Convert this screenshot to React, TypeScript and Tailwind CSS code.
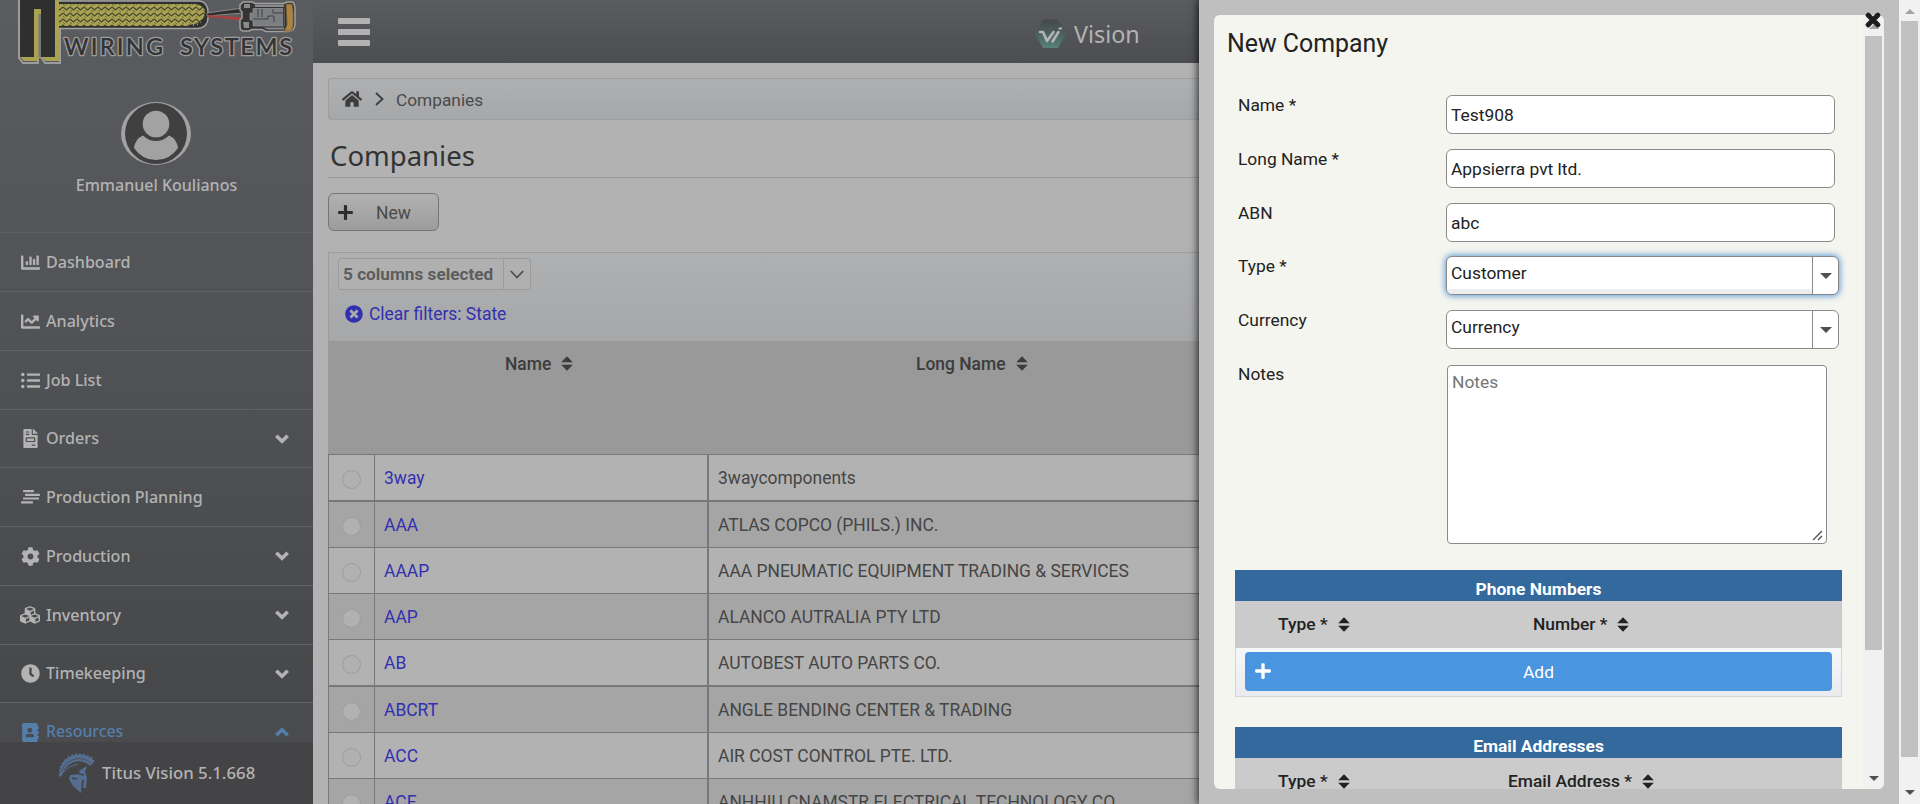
import type { ReactNode } from 'react';
import {
  FaAddressBook,
  FaChartBar,
  FaChartLine,
  FaClock,
  FaCog,
  FaCubes,
  FaFileInvoice,
  FaHome,
  FaListUl,
  FaPlus,
  FaTimes,
  FaTimesCircle,
} from 'react-icons/fa';

function PlanningIcon() {
  return (
    <svg width="19" height="14" viewBox="0 0 19 14" fill="currentColor">
      <rect x="2" y="0" width="11" height="2.2" rx="0.6" />
      <rect x="4" y="3.7" width="15" height="2.2" rx="0.6" />
      <rect x="2" y="7.4" width="16" height="2.2" rx="0.6" />
      <rect x="0" y="11.2" width="12" height="2.2" rx="0.6" />
    </svg>
  );
}

function NavChevron({ up }: { up?: boolean }) {
  return (
    <svg width="14" height="10" viewBox="0 0 14 10" fill="none" stroke="currentColor" strokeWidth="3.600">
      <path d={up ? 'M1.300 8.200 L7 2.800 L12.700 8.200' : 'M1.300 1.800 L7 7.200 L12.700 1.800'} />
    </svg>
  );
}

const logoText = "font-['Lato',sans-serif] text-[23.5px] font-semibold";

function Logo() {
  return (
    <svg className="block" width="313" height="70" viewBox="0 0 313 70">
      <defs>
        <pattern id="braid" width="7" height="6" patternUnits="userSpaceOnUse">
          <rect width="7" height="6" fill="#a8a251" />
          <path d="M0 1 L3.5 4 L7 1" fill="none" stroke="#45452f" strokeWidth="1.1" />
          <path d="M0 4.2 L2 6" stroke="#5f5d38" strokeWidth="0.8" />
        </pattern>
      </defs>
      <path d="M19 -3 V58 L23 63 H38 V57 H41 L45 63 H60 V-3 Z" fill="none" stroke="#9c9c9c" strokeWidth="2" />
      <path d="M58 1 H200 Q208 3 208 12 V18 Q208 27 198 28.500 H58 Z" fill="#303030" stroke="#a2a2a2" strokeWidth="1.5" />
      <path d="M58 4 H196 Q206 6 205 14 Q204 23 196 26 H58 Z" fill="url(#braid)" />
      <path d="M190 26 Q204 25 206 15" fill="none" stroke="#303030" strokeWidth="3" strokeDasharray="3 1" />
      <path d="M207 13 L243 8 V13 L207 16 Z" fill="#2e2e2e" stroke="#9a9a9a" strokeWidth="0.8" />
      <path d="M207 15 Q225 15 242 17.500 V21 Q225 18 207 17 Z" fill="#a64340" />
      <path
        d="M243 2 H252 L255 3.500 H284 L287 2 H292 Q295 3 295 10 V24 Q295 31 288 31.500 H266 L262 29.500 H252 L249 31 H244 Q240 31 240 27 V20 L242 18 V12 L240 10 V5 Z"
        fill="#343434"
        stroke="#a0a0a0"
        strokeWidth="1.5"
      />
      <path d="M244 4 H250 V8 H244 Z M243 22 H249 V28 H244 Z M255 4.500 H284 V7 H255 Z M263 27.500 H284 V29.500 H268 Z" fill="#8a8b8d" />
      <path d="M253 8.500 H284 V26 H253 V20 H250 V13 H253 Z" fill="#7d7e81" stroke="#96969a" strokeWidth="0.7" />
      <path d="M258 9 V17 M262 9 V17 M253 19 H268 V16 H274 V22 M273 9 V13 H283 M283.500 8 V26" fill="none" stroke="#3a3a3a" strokeWidth="0.9" />
      <path d="M286 4 H292 Q294 12 293 27 L291 31 H284 L287 25 Z" fill="#ab8444" stroke="#6b5430" strokeWidth="0.8" />
      <path d="M20 0 H59 V61 H46 L41 57 H39 V61 H24 L20 57 Z" fill="#a8a251" />
      <path d="M20 0 H55 V57 H41 V14 H39 V11 H36 V57 H20 Z" fill="#2f2f2f" />
      <path d="M34 57 V9 H41 V14 H38 V61 H34 Z" fill="#a8a251" />
      <path d="M38.500 14 H41 V57 H38.500 Z" fill="#77787a" />
      <g fill="#343434" stroke="#9d9d9e" strokeWidth="2.600" paintOrder="stroke" strokeLinejoin="round">
        <text x="64" y="55" textLength="99" lengthAdjust="spacing" className={logoText}>
          WIRING
        </text>
        <text x="180" y="55" textLength="112" lengthAdjust="spacing" className={logoText}>
          SYSTEMS
        </text>
      </g>
    </svg>
  );
}

function Avatar() {
  return (
    <svg className="block" width="70" height="63" viewBox="0 0 70 63">
      <ellipse cx="35" cy="31.500" rx="35" ry="31.500" fill="#a2a2a2" />
      <ellipse cx="35" cy="31.500" rx="31" ry="30.500" fill="#404040" />
      <circle cx="35" cy="22" r="13.300" fill="#a2a2a2" />
      <path d="M13 46 Q14 37 22 33.500 Q28 39 35 39 Q42 39 48 33.500 Q56 37 57 46 Q49 58 35 58 Q21 58 13 46 Z" fill="#a2a2a2" />
    </svg>
  );
}

function HelmetIcon() {
  return (
    <svg width="36" height="40" viewBox="0 0 36 40" fill="#566d92">
      <path d="M1 17 Q3 8 11 4 Q22 -1 31 5 L36 8 L31 13 Q25 7 17 8.500 Q7 11 4 20 L1 25 Z" />
      <path
        d="M1.500 23 Q1 8 14 3 Q23 0 33 6"
        fill="none"
        stroke="#566d92"
        strokeWidth="3"
        strokeDasharray="2.600 1.300"
      />
      <path d="M2.500 19 Q6 8 17 5.800 Q25 4.500 32 10" fill="none" stroke="#444547" strokeWidth="0.700" />
      <path d="M28 13 L20 18 L21 21 L11 22 L10 26 L14 33 L22 40 L23 27 L25 27 L24 35 L27 35 L28 25 L26 19 Z" />
      <path d="M4 20 Q10 12 19 11.500" fill="none" stroke="#566d92" strokeWidth="1" />
      <path d="M13 25 L18 26 M20 21 L25 22" fill="none" stroke="#444547" strokeWidth="1.400" />
    </svg>
  );
}

function VisionIcon() {
  return (
    <svg width="31" height="30" viewBox="0 0 31 30">
      <defs>
        <linearGradient id="hex" x1="0" y1="0" x2="0" y2="1">
          <stop offset="0" stopColor="#46494c" />
          <stop offset="0.450" stopColor="#4b5d5b" />
          <stop offset="1" stopColor="#56827a" />
        </linearGradient>
      </defs>
      <path d="M8 0.500 H23 L31 15 L23 29 H8 L0 15 Z" fill="url(#hex)" />
      <path d="M5 13 H8 L12 22 L18.500 13 M23.500 13 L17.500 22.500" fill="none" stroke="#b4b4b4" strokeWidth="2.600" strokeLinecap="round" strokeLinejoin="round" />
      <path d="M24.500 9.500 L26 9.300" stroke="#b4b4b4" strokeWidth="2.200" strokeLinecap="round" />
    </svg>
  );
}

function SortIcon() {
  return (
    <svg width="12" height="15" viewBox="0 0 12 15" fill="currentColor">
      <path d="M6 0.300 L11.800 6.300 H0.200 Z M6 14.700 L11.800 8.700 H0.200 Z" />
    </svg>
  );
}

function Triangle({ down, color }: { down?: boolean; color: string }) {
  return (
    <svg className="block" width="10" height="5" viewBox="0 0 10 5">
      <path d={down ? 'M0 0 H10 L5 5 Z' : 'M0 5 H10 L5 0 Z'} fill={color} />
    </svg>
  );
}

type NavItem = { label: string; icon: ReactNode; expandable?: boolean; height: string };

const navItems: NavItem[] = [
  { label: 'Dashboard', icon: <FaChartBar size={19} />, height: 'h-[59px]' },
  { label: 'Analytics', icon: <FaChartLine size={19} />, height: 'h-[59px]' },
  { label: 'Job List', icon: <FaListUl size={19} />, height: 'h-[59px]' },
  { label: 'Orders', icon: <FaFileInvoice size={19} />, expandable: true, height: 'h-[58px]' },
  { label: 'Production Planning', icon: <PlanningIcon />, height: 'h-[59px]' },
  { label: 'Production', icon: <FaCog size={19} />, expandable: true, height: 'h-[59px]' },
  { label: 'Inventory', icon: <FaCubes size={20} />, expandable: true, height: 'h-[59px]' },
  { label: 'Timekeeping', icon: <FaClock size={19} />, expandable: true, height: 'h-[58px]' },
];

function Sidebar() {
  return (
    <aside className="flex h-full w-[313px] shrink-0 flex-col overflow-hidden bg-linear-to-b from-[#5b5c60] to-[#444547] font-['Noto_Sans',sans-serif] text-[16.1px] font-medium text-[#b3b3b3]">
      <div className="flex h-[232px] shrink-0 flex-col items-center">
        <Logo />
        <div className="mt-8 pr-[1px]">
          <Avatar />
        </div>
        <div className="mt-2 text-[16px] leading-6">Emmanuel Koulianos</div>
      </div>
      <nav className="flex min-h-0 flex-1 flex-col overflow-hidden">
        {navItems.map((item) => (
          <div
            key={item.label}
            className={`flex shrink-0 items-center border-t border-[#5f6164] pr-[24px] pl-[20px] ${item.height}`}
          >
            <span className="flex w-[20px] justify-center">{item.icon}</span>
            <span className="ml-[6px] flex-1">{item.label}</span>
            {item.expandable && <NavChevron />}
          </div>
        ))}
        <div className="flex h-[59px] shrink-0 items-center border-t border-[#5f6164] bg-[#4a4b4e] pr-[24px] pl-[20px] text-[#557fab]">
          <span className="flex w-[20px] justify-center">
            <FaAddressBook size={19} />
          </span>
          <span className="ml-[6px] flex-1 text-[15.8px]">Resources</span>
          <NavChevron up />
        </div>
      </nav>
      <div className="flex h-[62px] shrink-0 items-center bg-[#444446] pl-[59px] text-[16.8px]">
        <HelmetIcon />
        <span className="ml-[7px]">Titus Vision 5.1.668</span>
      </div>
    </aside>
  );
}

type Company = { name: string; longName: string; border: string; shade: string };

const companies: Company[] = [
  { name: '3way', longName: '3waycomponents', border: 'border-t', shade: 'bg-[#b2b2b2]' },
  { name: 'AAA', longName: 'ATLAS COPCO (PHILS.) INC.', border: 'border-t-2', shade: 'bg-[#a5a5a5]' },
  { name: 'AAAP', longName: 'AAA PNEUMATIC EQUIPMENT TRADING & SERVICES', border: 'border-t', shade: 'bg-[#b2b2b2]' },
  { name: 'AAP', longName: 'ALANCO AUTRALIA PTY LTD', border: 'border-t', shade: 'bg-[#a5a5a5]' },
  { name: 'AB', longName: 'AUTOBEST AUTO PARTS CO.', border: 'border-t', shade: 'bg-[#b2b2b2]' },
  { name: 'ABCRT', longName: 'ANGLE BENDING CENTER & TRADING', border: 'border-t-2', shade: 'bg-[#a5a5a5]' },
  { name: 'ACC', longName: 'AIR COST CONTROL PTE. LTD.', border: 'border-t', shade: 'bg-[#b2b2b2]' },
  { name: 'ACE', longName: 'ANHHIU CNAMSTR ELECTRICAL TECHNOLOGY CO.', border: 'border-t', shade: 'bg-[#a5a5a5]' },
];

function MainArea() {
  return (
    <main className="flex h-full w-[886px] shrink-0 flex-col overflow-hidden bg-[#b2b2b2] text-[17.46px] text-[#4a4a4a]">
      <header className="flex h-[63px] shrink-0 items-center bg-linear-to-b from-[#5b5c60] to-[#4c4d4f] pl-[25px]">
        <div className="flex w-8 flex-col gap-[5px]">
          <span className="h-[6px] rounded-[1px] bg-[#b2b2b2]" />
          <span className="h-[6px] rounded-[1px] bg-[#b2b2b2]" />
          <span className="h-[6px] rounded-[1px] bg-[#b2b2b2]" />
        </div>
        <div className="ml-[665px] flex items-center gap-2 pt-[5px] font-['Noto_Sans',sans-serif] text-[23.3px] text-[#b3b3b3]">
          <VisionIcon />
          <span>Vision</span>
        </div>
      </header>
      <div className="flex flex-1 flex-col overflow-hidden pt-[15px] pl-[15px]">
        <div className="flex h-[42px] shrink-0 items-center rounded-l border border-r-0 border-[#9c9d9e] bg-linear-to-b from-[#afb0b2] to-[#a6a7a9] pl-[13px]">
          <FaHome size={20} className="text-[#3d3d3e]" />
          <svg className="ml-[13px]" width="9" height="14" viewBox="0 0 9 14" fill="none" stroke="#3d3d3e" strokeWidth="1.800">
            <path d="M1 1 L7.500 7 L1 13" />
          </svg>
          <span className="ml-[12px] pt-[4px] text-[17.3px]">Companies</span>
        </div>
        <h1 className="flex h-[58px] shrink-0 items-center border-b border-[#9c9c9c] pt-[14px] pl-[2px] font-['Noto_Sans',sans-serif] text-[27.5px] text-[#333333]">
          Companies
        </h1>
        <button className="mt-[15px] flex h-[38px] w-[111px] shrink-0 items-center rounded-md border border-[#757575] bg-linear-to-b from-[#b1b1b1] to-[#9c9c9c] pl-[8px]">
          <FaPlus size={17} className="text-[#2d2d2d]" />
          <span className="ml-[22px] pt-[2px]">New</span>
        </button>
        <div className="mt-[21px] flex h-[89px] shrink-0 flex-col border-t border-l border-[#9c9d9e] bg-linear-to-b from-[#afb0b2] to-[#a6a7a9] pt-[5px] pl-[9px]">
          <div className="flex h-8 w-[193px] items-stretch rounded-[3px] border border-[#9b9b9b] bg-[#b0b0b0]">
            <span className="flex flex-1 items-center border-r border-[#9b9b9b] pt-[1px] pl-[4px] text-[17.2px] font-bold text-[#5d5d5d]">
              5 columns selected
            </span>
            <span className="flex w-[26px] items-center justify-center">
              <svg width="14" height="9" viewBox="0 0 14 9" fill="none" stroke="#4d4d4d" strokeWidth="1.800">
                <path d="M0.800 1 L7 7.500 L13.200 1" />
              </svg>
            </span>
          </div>
          <a className="mt-[11px] flex items-center gap-[6px] pl-[7px] text-[#3230b0]">
            <FaTimesCircle size={18} />
            <span>Clear filters: State</span>
          </a>
        </div>
        <div className="flex h-[113px] shrink-0 bg-[#999999] pt-[11px] font-medium text-[#3c3c3c]">
          <div className="flex w-[380px] gap-[10px] pl-[177px]">
            <span className="leading-6">Name</span>
            <span className="pt-1">
              <SortIcon />
            </span>
          </div>
          <div className="flex gap-[10px] pl-[208px]">
            <span className="leading-6">Long Name</span>
            <span className="pt-1">
              <SortIcon />
            </span>
          </div>
        </div>
        {companies.map((row) => (
          <div key={row.name} className={`flex shrink-0 border-[#777878] ${row.border} ${row.shade}`}>
            <span className="flex h-[45px] w-[47px] items-center justify-center border-x border-[#777878] pt-[3px]">
              <span className="size-[19px] rounded-full border border-[#9d9d9d] bg-[#b1b1b1]" />
            </span>
            <span className="flex w-[334px] items-center border-r-2 border-[#777878] pt-[1px] pl-[9px] text-[#3230b0]">{row.name}</span>
            <span className="flex items-center pt-[1px] pl-[9px] whitespace-nowrap text-[#454545]">{row.longName}</span>
          </div>
        ))}
      </div>
    </main>
  );
}

function FormRow({ label, children }: { label: string; children: ReactNode }) {
  return (
    <div className="flex h-[53.8px] shrink-0 pl-[24px]">
      <span className="-mt-[1px] w-[208px] leading-6">{label}</span>
      {children}
    </div>
  );
}

function TextField({ value }: { value: string }) {
  return (
    <div className="mt-[1px] flex h-[39px] w-[389px] items-center rounded-md border border-[#8a8a8a] bg-white pt-[1px] pl-[4px]">
      {value}
    </div>
  );
}

function SelectField({ value, focused }: { value: string; focused?: boolean }) {
  return (
    <div
      className={
        focused
          ? 'mt-[1px] flex h-[39px] w-[393px] overflow-hidden rounded-md border border-[#85898e] bg-white shadow-[0_0_6px_1px_#5e9bd8]'
          : 'mt-[1px] flex h-[39px] w-[393px] overflow-hidden rounded-md border border-[#8a8a8a] bg-white'
      }
    >
      <span className={focused ? 'flex-1 border-b-[5px] border-[#eeeeee] pl-[4px] leading-8' : 'flex-1 pl-[4px] leading-8'}>
        {value}
      </span>
      <span className="flex w-[26px] items-center justify-center border-l border-[#8a8a8a]">
        <svg width="12" height="6" viewBox="0 0 12 6">
          <path d="M0 0 H12 L6 6 Z" fill="#505050" />
        </svg>
      </span>
    </div>
  );
}

function ColumnTitle({ text }: { text: string }) {
  return (
    <span className="flex items-center gap-[10px]">
      {text}
      <SortIcon />
    </span>
  );
}

function Drawer() {
  return (
    <section className="relative h-full w-[700px] shrink-0 bg-[#bfbfbf] px-[15px] pt-[15px] shadow-[0_0_8px_1px_rgba(0,0,0,0.800)]">
      <div className="flex h-[774px] overflow-hidden rounded-md bg-[#f4f5ee] text-[#222222]">
        <div className="flex w-[649px] shrink-0 flex-col overflow-hidden">
          <h2 className="h-[79px] shrink-0 pt-[13px] pl-[13px] text-[24.9px] leading-8">New Company</h2>
          <FormRow label="Name *">
            <TextField value="Test908" />
          </FormRow>
          <FormRow label="Long Name *">
            <TextField value="Appsierra pvt ltd." />
          </FormRow>
          <FormRow label="ABN">
            <TextField value="abc" />
          </FormRow>
          <FormRow label="Type *">
            <SelectField value="Customer" focused />
          </FormRow>
          <FormRow label="Currency">
            <SelectField value="Currency" />
          </FormRow>
          <div className="flex h-[207px] shrink-0 pl-[24px]">
            <span className="-mt-[1px] w-[209px] leading-6">Notes</span>
            <div className="mt-[2px] flex h-[179px] w-[380px] items-end justify-between rounded-[4px] border border-[#8a8a8a] bg-white pl-[4px]">
              <span className="self-start pt-[4px] leading-6 text-[#757575]">Notes</span>
              <svg width="14" height="13" viewBox="0 0 14 13" stroke="#505050" strokeWidth="1.300">
                <path d="M1 10 L10 1 M6 10 L10 6" />
              </svg>
            </div>
          </div>
          <div className="mx-[21px] flex w-[607px] shrink-0 flex-col">
            <div className="h-[31px] bg-[#33699d] pt-[7px] text-center leading-6 font-bold text-white">Phone Numbers</div>
            <div className="flex h-[47px] items-center bg-[#cbcbcb] pl-[43px] font-medium">
              <span className="w-[255px]">
                <ColumnTitle text="Type *" />
              </span>
              <ColumnTitle text="Number *" />
            </div>
            <div className="h-[49px] border border-t-0 border-[#d5d6da] bg-linear-to-b from-[#f6f7f9] to-[#eaebef] px-[9px] pt-[4px]">
              <button className="flex h-[39px] w-full items-center rounded-[4px] bg-[#4a95e0] pl-[9px] text-white">
                <FaPlus size={18} />
                <span className="flex-1 pt-[1px] pr-[27px] text-center">Add</span>
              </button>
            </div>
            <div className="mt-[30px] h-[31px] bg-[#33699d] pt-[7px] text-center leading-6 font-bold text-white">
              Email Addresses
            </div>
            <div className="flex h-[47px] items-center bg-[#cbcbcb] pl-[43px] font-medium">
              <span className="w-[230px]">
                <ColumnTitle text="Type *" />
              </span>
              <ColumnTitle text="Email Address *" />
            </div>
          </div>
        </div>
        <div className="flex w-[21px] shrink-0 flex-col items-center bg-[#f1f1f1]">
          <div className="flex h-[21px] items-center pt-[2px]">
            <Triangle color="#a3a3a3" />
          </div>
          <div className="h-[614px] w-[17px] bg-[#c1c1c1]" />
          <div className="mt-auto flex h-[21px] items-center pb-[1px]">
            <Triangle down color="#505050" />
          </div>
        </div>
      </div>
      <FaTimes size={20} className="absolute top-[10px] left-[664px] text-[#1c1c1c]" stroke="currentColor" strokeWidth={30} />
    </section>
  );
}

function PageScrollbar() {
  return (
    <div className="relative flex h-full w-[21px] shrink-0 flex-col items-center bg-[#f1f1f1]">
      <div className="flex h-[21px] items-center pt-[2px]">
        <Triangle color="#a3a3a3" />
      </div>
      <div className="h-[736px] w-[17px] bg-[#c1c1c1]" />
      <div className="mt-auto flex h-[21px] items-center pb-[2px]">
        <Triangle down color="#505050" />
      </div>
    </div>
  );
}

export default function App() {
  return (
    <div className="flex h-[804px] w-[1920px] overflow-hidden font-['Roboto',sans-serif] text-[17.4px]">
      <Sidebar />
      <MainArea />
      <Drawer />
      <PageScrollbar />
    </div>
  );
}
